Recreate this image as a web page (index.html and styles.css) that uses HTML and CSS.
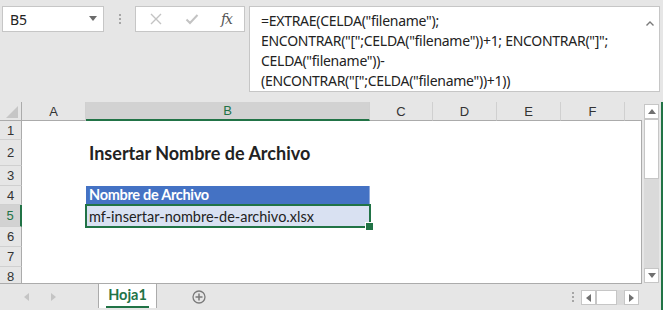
FILE: index.html
```html
<!DOCTYPE html>
<html lang="es">
<head>
    <meta charset="UTF-8">
    <title>Insertar Nombre de Archivo - Excel</title>
    <link rel="stylesheet" href="styles.css">
</head>
<body>
    <div class="app">
        <!-- barra de fórmulas -->
        <div class="toolbar">
            <div class="namebox">
                <span>B5</span>
                <svg class="caret" viewBox="0 0 8 5"><polygon points="0,0 8,0 4,5" fill="#6b6b6b"/></svg>
            </div>
            <div class="grip"><i></i><i></i><i></i></div>
            <div class="fxbox">
                <svg class="fx-icon" viewBox="0 0 14 14"><path d="M2 2 L12 12 M12 2 L2 12" stroke="#c3c3c3" stroke-width="1.4" fill="none"/></svg>
                <svg class="fx-icon" viewBox="0 0 14 14"><path d="M1.5 7.5 L5 11 L12.5 3" stroke="#c3c3c3" stroke-width="2" fill="none"/></svg>
                <span class="fx">fx</span>
            </div>
            <div class="formula">
                <div class="formula-text">
                    <div>=EXTRAE(CELDA("filename");</div>
                    <div>ENCONTRAR("[";CELDA("filename"))+1; ENCONTRAR("]";</div>
                    <div>CELDA("filename"))-</div>
                    <div>(ENCONTRAR("[";CELDA("filename"))+1))</div>
                </div>
                <svg class="collapse" viewBox="0 0 8 5"><path d="M0.5 4.5 L4 1 L7.5 4.5" stroke="#7a7a7a" stroke-width="1.4" fill="none"/></svg>
            </div>
        </div>

        <!-- hoja -->
        <div class="sheet">
            <div class="grid">
                <div class="colhead">
                    <div class="corner"><svg viewBox="0 0 12 12"><polygon points="12,0 12,12 0,12" fill="#c6c6c6"/></svg></div>
                    <div class="ch col-a">A</div>
                    <div class="ch col-b active">B</div>
                    <div class="ch col-c">C</div>
                    <div class="ch col-d">D</div>
                    <div class="ch col-e">E</div>
                    <div class="ch col-f">F</div>
                    <div class="ch col-rest"></div>
                </div>
                <div class="rows">
                    <div class="row r1"><div class="rh">1</div></div>
                    <div class="row r2">
                        <div class="rh">2</div>
                        <div class="cell col-a"></div>
                        <div class="cell col-b title">Insertar Nombre de Archivo</div>
                    </div>
                    <div class="row r3"><div class="rh">3</div></div>
                    <div class="row r4">
                        <div class="rh">4</div>
                        <div class="cell col-a"></div>
                        <div class="cell col-b thead">Nombre de Archivo</div>
                    </div>
                    <div class="row r5">
                        <div class="rh active">5</div>
                        <div class="cell col-a"></div>
                        <div class="cell col-b tdata selected">mf-insertar-nombre-de-archivo.xlsx</div>
                    </div>
                    <div class="row r6"><div class="rh">6</div></div>
                    <div class="row r7"><div class="rh">7</div></div>
                    <div class="row r8"><div class="rh">8</div></div>
                </div>
            </div>
            <div class="vscroll">
                <div class="vtrack">
                    <div class="sbtn"><svg viewBox="0 0 8 5"><polygon points="0,5 8,5 4,0" fill="#707070"/></svg></div>
                    <div class="vthumb"></div>
                    <div class="vspace"></div>
                    <div class="sbtn"><svg viewBox="0 0 8 5"><polygon points="0,0 8,0 4,5" fill="#707070"/></svg></div>
                </div>
            </div>
        </div>

        <!-- pestañas -->
        <div class="tabs">
            <div class="tabnav">
                <svg viewBox="0 0 5 8"><polygon points="5,0 5,8 0,4" fill="#c4c4c4"/></svg>
                <svg viewBox="0 0 5 8"><polygon points="0,0 0,8 5,4" fill="#c4c4c4"/></svg>
            </div>
            <div class="tab"><span>Hoja1</span></div>
            <div class="addsheet">
                <svg viewBox="0 0 14 14"><circle cx="7" cy="7" r="6" stroke="#7a7a7a" stroke-width="1.3" fill="none"/><path d="M7 3.5 V10.5 M3.5 7 H10.5" stroke="#7a7a7a" stroke-width="1.5"/></svg>
            </div>
            <div class="tabfill"></div>
            <div class="grip hgrip"><i></i><i></i><i></i></div>
            <div class="hscroll">
                <div class="sbtn"><svg viewBox="0 0 5 8"><polygon points="5,0 5,8 0,4" fill="#707070"/></svg></div>
                <div class="hthumb"></div>
                <div class="hspace"></div>
                <div class="sbtn"><svg viewBox="0 0 5 8"><polygon points="0,0 0,8 5,4" fill="#707070"/></svg></div>
            </div>
        </div>
    </div>
</body>
</html>
```
FILE: styles.css
```css
/* --- 1. GERAL --- */
:root {
    --bg: #e6e6e6;
    --line: #ababab;
    --soft-line: #d0d0d0;
    --green: #217346;
    --blue: #4472c4;
    --blue-light: #d9e1f2;
    --text: #222;
}
* { margin: 0; padding: 0; box-sizing: border-box; }
body {
    background: var(--bg);
    font-family: 'Noto Sans', 'Open Sans', sans-serif;
    color: var(--text);
}
.app { width: 663px; height: 310px; display: flex; flex-direction: column; overflow: hidden; }

/* --- 2. BARRA DE FÓRMULAS --- */
.toolbar { height: 102px; display: flex; align-items: flex-start; padding: 6px 0 0 2px; }
.namebox {
    width: 102px; height: 26px;
    background: #fff; border: 1px solid #c6c6c6;
    display: flex; align-items: center; justify-content: space-between;
    padding: 0 6px 0 7px; font-size: 14px;
}
.namebox .caret { width: 8px; height: 5px; margin-top: -2px; }
.grip { width: 31px; height: 26px; display: flex; flex-direction: column; align-items: center; justify-content: center; gap: 2px; }
.grip i { width: 2px; height: 2px; background: #a6a6a6; }
.fxbox {
    width: 110px; height: 26px;
    background: #fff; border: 1px solid #c6c6c6;
    display: flex; align-items: center; justify-content: space-between;
    padding: 0 12px 0 13px;
}
.fx-icon { width: 14px; height: 14px; }
.fx { font-family: 'DejaVu Serif', 'Liberation Serif', serif; font-style: italic; font-size: 14px; color: #555; letter-spacing: -1px; }
.formula {
    width: 411px; height: 86px; margin-left: 4px;
    background: #fff; border: 1px solid #c6c6c6;
    display: flex; justify-content: space-between;
    padding: 0 5px 0 11px;
}
.formula-text { font-size: 14px; letter-spacing: -0.28px; line-height: 20px; padding-top: 4px; white-space: nowrap; }
.collapse { width: 8px; height: 5px; margin-top: 14px; }

/* --- 3. HOJA --- */
.sheet { height: 182px; display: flex; }
.grid { width: 642px; display: flex; flex-direction: column; }
.colhead { height: 19px; display: flex; }
.corner { width: 22px; display: flex; align-items: flex-end; justify-content: flex-end; padding: 0 3px 2px 0; border-bottom: 1px solid var(--line); border-right: 1px solid var(--line); }
.corner svg { width: 12px; height: 12px; }
.ch {
    display: flex; align-items: center; justify-content: center;
    font-family: 'Liberation Sans', sans-serif; font-size: 13px; color: #333;
    border-right: 1px solid var(--soft-line); border-bottom: 1px solid var(--line);
}
.ch.active { background: #d2d2d2; color: var(--green); border-bottom: 2px solid var(--green); }
.col-a { width: 64px; }
.col-b { width: 284px; }
.col-c { width: 63px; }
.col-d, .col-e, .col-f { width: 64px; }
.col-rest { flex: 1; border-right: none; }

.rows { flex: 1; background: #fff; border-right: 1px solid var(--line); border-bottom: 1px solid var(--line); overflow: hidden; }
.row { display: flex; }
.r1 { height: 19px; }
.r2 { height: 26px; }
.r3 { height: 20px; }
.r4 { height: 19px; }
.r5 { height: 22px; }
.r6, .r7 { height: 20px; }
.r8 { height: 20px; }
.rh {
    width: 22px; flex: none; background: var(--bg);
    display: flex; align-items: center; justify-content: center;
    font-family: 'Liberation Sans', sans-serif; font-size: 13px; color: #333;
    border-right: 1px solid var(--line); border-bottom: 1px solid var(--soft-line);
}
.rh.active { background: #d2d2d2; color: var(--green); border-right: 2px solid var(--green); }

.cell { font-family: 'Lato', sans-serif; font-size: 14.5px; display: flex; align-items: flex-end; padding: 0 0 2px 3px; white-space: nowrap; }
.title { font-weight: 700; font-size: 18px; padding-bottom: 2px; }
.thead { background: var(--blue); color: #fff; font-weight: 700; letter-spacing: -0.3px; border-right: 1px solid #8ea9db; }
.tdata { background: var(--blue-light); position: relative; outline: 2px solid var(--green); outline-offset: -1px; }
.tdata::after {
    content: ''; position: absolute; right: -4px; bottom: -4px;
    width: 7px; height: 7px; background: var(--green); border: 1px solid #fff;
}

/* --- 4. BARRAS DE ROLAGEM --- */
.vscroll { width: 21px; padding: 2px 2px 0 2px; border-right: 2px solid var(--green); }
.vtrack { width: 15px; height: 179px; display: flex; flex-direction: column; }
.sbtn { background: #fff; border: 1px solid #c6c6c6; display: flex; align-items: center; justify-content: center; }
.vtrack .sbtn { height: 15px; }
.vtrack .sbtn svg { width: 8px; height: 5px; }
.vthumb { height: 60px; background: #fff; border: 1px solid #c6c6c6; }
.vspace { flex: 1; background: #dadada; }

/* --- 5. PESTAÑAS --- */
.tabs { flex: 1; display: flex; border-right: 2px solid var(--green); }
.tabnav { width: 98px; display: flex; align-items: center; gap: 22px; padding-left: 24px; }
.tabnav svg { width: 5px; height: 8px; }
.tab {
    width: 59px; height: 24px; background: #fff;
    border-left: 1px solid var(--line); border-right: 1px solid var(--line);
    display: flex; justify-content: center;
}
.tab span {
    font-family: 'Lato', sans-serif; font-weight: 700; font-size: 14.5px; color: var(--green);
    border-bottom: 2px solid var(--green); padding: 0 2px; line-height: 22px;
}
.addsheet { width: 82px; display: flex; align-items: center; padding-left: 35px; }
.addsheet svg { width: 14px; height: 14px; }
.tabfill { flex: 1; }
.hgrip { width: 16px; }
.hscroll { width: 58px; height: 15px; margin: 6px 22px 0 0; display: flex; }
.hscroll .sbtn { width: 15px; }
.hscroll .sbtn svg { width: 5px; height: 8px; }
.hthumb { width: 21px; background: #fff; border: 1px solid #c6c6c6; }
.hspace { flex: 1; background: #dadada; }
```
